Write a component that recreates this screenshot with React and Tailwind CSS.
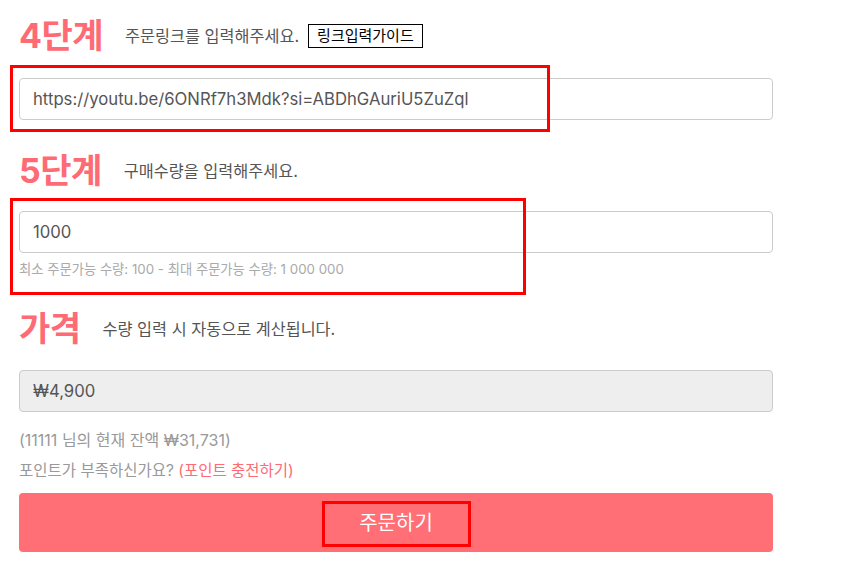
import React from 'react';

const FONT = "font-['Inter','Noto_Sans_CJK_KR',sans-serif]";

function StepHeading({ title, desc, children }) {
  return (
    <div className="flex items-center h-[40px]">
      <h2 className="text-[34px] leading-[40px] font-bold text-[#ff6b74] tracking-[-0.5px]">{title}</h2>
      <p className="ml-[22px] text-[16.3px] text-[#555] leading-[22px]">{desc}</p>
      {children}
    </div>
  );
}

export default function App() {
  return (
    <div className={`relative w-[842px] h-[582px] bg-white overflow-hidden ${FONT}`}>
      <div className="w-[754px] ml-[19px] pt-[16px] flex flex-col">
        {/* 4단계 — order link */}
        <StepHeading title="4단계" desc="주문링크를 입력해주세요.">
          <button className="ml-[9px] h-[24px] px-[8px] border border-black text-[15px] leading-[22px] text-black bg-white">
            링크입력가이드
          </button>
        </StepHeading>
        <input
          readOnly
          value="https://youtu.be/6ONRf7h3Mdk?si=ABDhGAuriU5ZuZql"
          className="mt-[22px] h-[42px] w-full border border-[#ccc] rounded-[4px] px-[13px] text-[16.7px] text-[#555] outline-none"
        />

        {/* 5단계 — quantity */}
        <div className="mt-[31px]">
          <StepHeading title="5단계" desc="구매수량을 입력해주세요." />
        </div>
        <input
          readOnly
          value="1000"
          className="mt-[20px] h-[42px] w-full border border-[#ccc] rounded-[4px] px-[13px] text-[16.7px] text-[#555] outline-none"
        />
        <p className="mt-[8px] text-[13.3px] leading-[16px] text-[#aaa]">
          최소 주문가능 수량: 100 - 최대 주문가능 수량: 1 000 000
        </p>

        {/* 가격 */}
        <div className="mt-[32px]">
          <StepHeading title="가격" desc="수량 입력 시 자동으로 계산됩니다." />
        </div>
        <input
          readOnly
          value="₩4,900"
          className="mt-[21px] h-[42px] w-full border border-[#ccc] rounded-[4px] px-[13px] text-[16.7px] text-[#555] bg-[#eee] outline-none"
        />
        <p className="mt-[17px] text-[16px] leading-[22px] text-[#999]">(11111 님의 현재 잔액 ₩31,731)</p>
        <p className="mt-[10px] text-[15.5px] leading-[20px] text-[#999]">
          포인트가 부족하신가요? <span className="text-[#ff6b74]">(포인트 충전하기)</span>
        </p>

        <button className="mt-[12px] h-[59px] w-full rounded-[4px] bg-[#ff6f75] text-white text-[20px] flex items-center justify-center">
          주문하기
        </button>
      </div>

      {/* red annotation boxes */}
      <div className="absolute left-[10px] top-[65px] w-[540px] h-[67px] border-[3px] border-[#ff0000] pointer-events-none" />
      <div className="absolute left-[10px] top-[198px] w-[516px] h-[97px] border-[3px] border-[#ff0000] pointer-events-none" />
      <div className="absolute left-[322px] top-[501px] w-[149px] h-[46px] border-[3px] border-[#ff0000] pointer-events-none" />
    </div>
  );
}
